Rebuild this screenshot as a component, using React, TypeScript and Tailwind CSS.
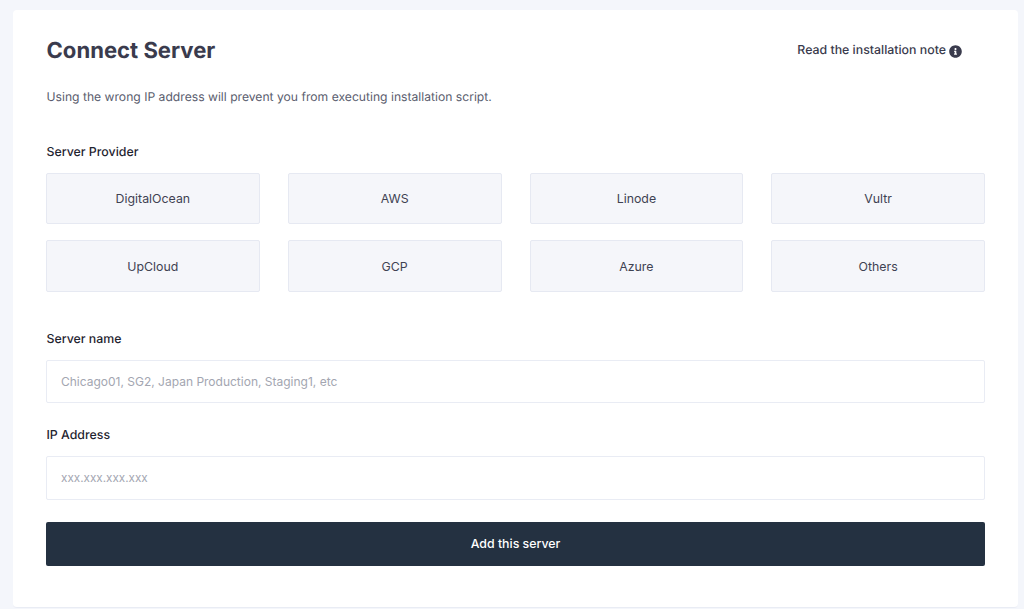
const providers = ["DigitalOcean", "AWS", "Linode", "Vultr", "UpCloud", "GCP", "Azure", "Others"];

const InfoIcon = () => (
  <svg viewBox="0 0 512 512" className="w-[13px] h-[13px] ml-[3px] mt-[3px] fill-[#3a3b4d]">
    <path d="M256 8C119 8 8 119 8 256s111 248 248 248 248-111 248-248S393 8 256 8zm0 110c23.2 0 42 18.8 42 42s-18.8 42-42 42-42-18.800-42-42 18.800-42 42-42zm56 254c0 6.600-5.400 12-12 12h-88c-6.600 0-12-5.400-12-12v-24c0-6.600 5.400-12 12-12h12v-64h-12c-6.600 0-12-5.400-12-12v-24c0-6.600 5.400-12 12-12h64c6.600 0 12 5.400 12 12v100h12c6.600 0 12 5.400 12 12v24z" />
  </svg>
);

export default function App() {
  return (
    <div className="min-h-[609px] bg-[#f4f6fb] pt-[10px] pl-[13px] pr-[6px] font-['Inter',sans-serif] [text-rendering:geometricPrecision] overflow-hidden">
      <div className="h-[598px] bg-white rounded-[4px] border-b border-[#e9ecf4] pl-[33px] pr-[33px] pt-[26px]">
        <div className="flex justify-between h-[30px]">
          <h1 className="pl-[0.5px] text-[22.1px] leading-[30px] font-bold text-[#3a3b4d]">Connect Server</h1>
          <a className="flex items-center h-[28px] mr-[23px] text-[12.35px] font-medium text-[#3a3b4d]">
            Read the installation note
            <InfoIcon />
          </a>
        </div>
        <p className="mt-[22px] pl-[0.5px] text-[12.15px] leading-[18px] text-[#5a5d6e]">
          Using the wrong IP address will prevent you from executing installation script.
        </p>

        <label className="block mt-[37px] pl-[0.5px] text-[12.35px] leading-[18px] font-medium text-[#1f2430]">Server Provider</label>
        <div className="mt-[12px] grid grid-cols-4 grid-rows-[51px_52px] gap-x-[28px] gap-y-[16px]">
          {providers.map((name) => (
            <button
              key={name}
              className="pt-[2px] bg-[#f5f6fa] border border-[#e6e9f2] rounded-[2px] text-[12.35px] text-[#3f4252]"
            >
              {name}
            </button>
          ))}
        </div>

        <label className="block mt-[38px] pl-[0.5px] text-[12.35px] leading-[18px] font-medium text-[#1f2430]">Server name</label>
        <input
          placeholder="Chicago01, SG2, Japan Production, Staging1, etc"
          className="block w-full mt-[12px] h-[43px] px-[14px] border border-[#e9ecf4] rounded-[2px] text-[12px] placeholder:text-[#a3a6b1]"
        />

        <label className="block mt-[23px] pl-[0.5px] text-[12.35px] leading-[18px] font-medium text-[#1f2430]">IP Address</label>
        <input
          placeholder="xxx.xxx.xxx.xxx"
          className="block w-full mt-[12px] h-[44px] px-[14px] border border-[#e9ecf4] rounded-[2px] text-[11.7px] placeholder:text-[#a3a6b1]"
        />

        <button className="block w-full mt-[22px] pt-[1px] h-[44px] bg-[#243141] rounded-[2px] text-[12.35px] font-medium text-white">
          Add this server
        </button>
      </div>
    </div>
  );
}
